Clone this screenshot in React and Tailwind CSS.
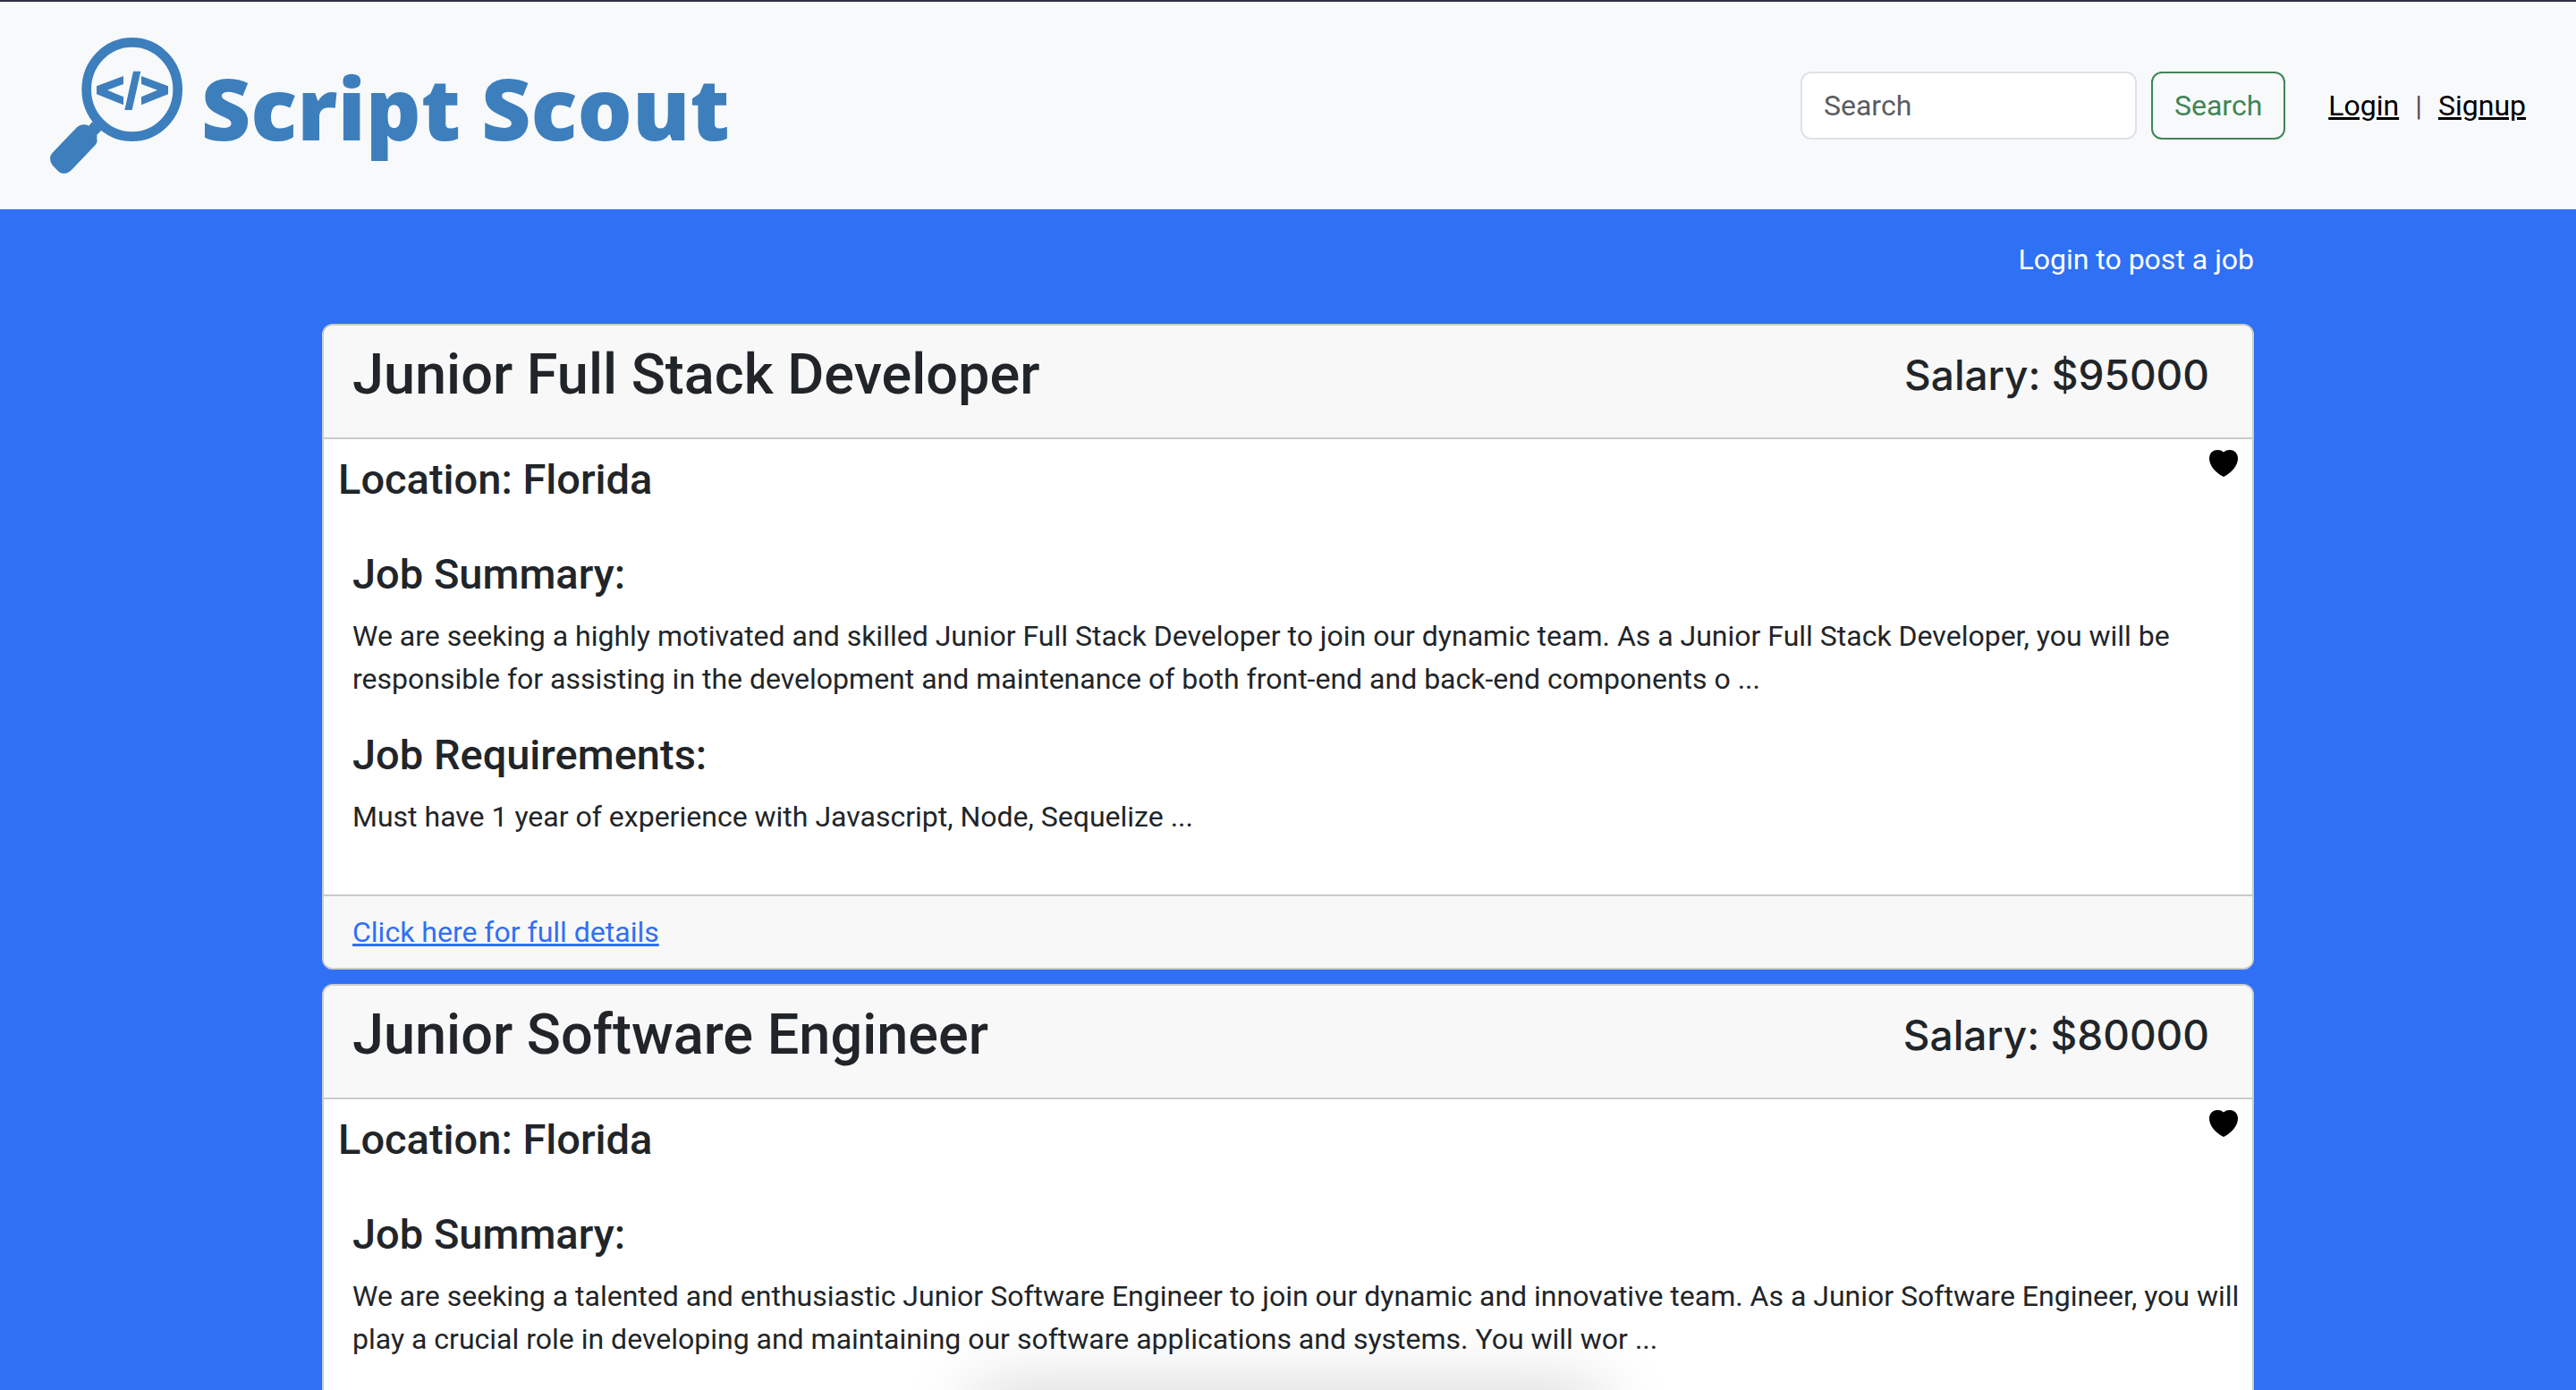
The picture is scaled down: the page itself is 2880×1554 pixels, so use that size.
const jobs = [
  {
    title: "Junior Full Stack Developer",
    salary: 95000,
    location: "Florida",
    summary:
      "We are seeking a highly motivated and skilled Junior Full Stack Developer to join our dynamic team. As a Junior Full Stack Developer, you will be responsible for assisting in the development and maintenance of both front-end and back-end components o ...",
    requirements: "Must have 1 year of experience with Javascript, Node, Sequelize ...",
  },
  {
    title: "Junior Software Engineer",
    salary: 80000,
    location: "Florida",
    summary:
      "We are seeking a talented and enthusiastic Junior Software Engineer to join our dynamic and innovative team. As a Junior Software Engineer, you will play a crucial role in developing and maintaining our software applications and systems. You will wor ...",
    requirements: "Must have 1 year of experience with Javascript, Node, Sequelize ...",
  },
];

function Logo() {
  return (
    <svg viewBox="48 36 2292 456" className="h-[152px] w-[764px]" fill="#3d7fbd" role="img" aria-label="Script Scout">
      <ellipse cx="323" cy="210" rx="153" ry="158" fill="none" stroke="#3d7fbd" strokeWidth="32" />
      <path d="M294 165V192L240 212L294 235V262L204 226V199Z" />
      <path d="M354 165V192L408 212L354 235V262L444 226V199Z" />
      <path d="M327 149H352L323 279H298Z" />
      <path d="M190 318L220 347L205 362V378Q208 386 200 396L120 480Q108 492 95 492Q82 492 74 483L56 464Q48 456 48 442Q48 430 56 422L138 337Q148 328 160 328Q170 328 178 332Z" />
      <text x="554" y="380" fontSize="289" fontWeight="800" fontFamily="'Open Sans', sans-serif">Script</text>
      <text x="1494" y="380" fontSize="289" fontWeight="800" fontFamily="'Open Sans', sans-serif">Scout</text>
    </svg>
  );
}

function Heart() {
  return (
    <svg viewBox="0 0 32 30" className="h-[30px] w-8" fill="black" aria-hidden="true">
      <path d="M16 2.500C18 .8 20 0 23 0C28.500 0 32 4.300 32 9.500C32 17 25.500 25 17 29.600Q16 30.200 15 29.600C6.500 25 0 17 0 9.500C0 4.300 3.500 0 9 0C12 0 14 .8 16 2.500Z" />
    </svg>
  );
}

function JobCard({ job }) {
  return (
    <article className="overflow-hidden rounded-xl border-2 border-[#cbcccd] bg-white">
      <header className="flex items-center justify-between border-b-2 border-[#cacaca] bg-[#f8f8f8] px-8 pt-4 pb-8">
        <h2 className="text-[63px] leading-[77px] font-medium">{job.title}</h2>
        <p className="pr-4 font-['Inter',sans-serif] text-[46px] leading-[58px] font-medium">Salary: ${job.salary}</p>
      </header>
      <div className="flex items-start justify-between px-4 pt-4">
        <h3 className="text-[47px] leading-[58px] font-medium">Location: {job.location}</h3>
        <button type="button" aria-label="Save job" className="-mt-1">
          <Heart />
        </button>
      </div>
      <div className="pt-12 pr-2 pb-[63px] pl-8">
        <h3 className="mb-4 text-[47px] leading-[58px] font-medium">Job Summary:</h3>
        <p className="mb-8">{job.summary}</p>
        <h3 className="mb-4 text-[47px] leading-[58px] font-medium">Job Requirements:</h3>
        <p>{job.requirements}</p>
      </div>
      <footer className="border-t-2 border-[#cacaca] bg-[#f8f8f8] px-8 py-4">
        <a href="#details" className="text-[#2f70f5] underline">Click here for full details</a>
      </footer>
    </article>
  );
}

export default function App() {
  return (
    <div className="relative h-screen overflow-hidden bg-[#2f70f5] font-['Roboto',sans-serif] text-[32px] leading-[48px] text-[#212529]">
      <header className="flex items-center justify-between border-t-2 border-[#2f3045] bg-[#f8f9fb] px-14 py-10">
        <a href="#home">
          <Logo />
        </a>
        <nav className="flex items-center">
          <form className="flex gap-4">
            <input
              type="search"
              aria-label="Search"
              placeholder="Search"
              className="h-19 w-94 rounded-xl border-2 border-[#dee2e6] bg-white px-6 placeholder:text-[#595c5f] placeholder:opacity-100"
            />
            <button type="button" className="h-19 rounded-xl border-2 border-[#408558] px-6 text-[#408558]">
              Search
            </button>
          </form>
          <div className="ml-12 flex gap-[18px] text-black">
            <a href="#login" className="underline">Login</a>
            <span className="text-[#555555]">|</span>
            <a href="#signup" className="underline">Signup</a>
          </div>
        </nav>
      </header>
      <main className="mx-auto w-3/4">
        <p className="pt-8 pb-12 text-right text-white">Login to post a job</p>
        <div className="flex flex-col gap-4">
          {jobs.map((job) => (
            <JobCard key={job.title} job={job} />
          ))}
        </div>
      </main>
      <div className="pointer-events-none absolute top-full left-1/2 h-20 w-[700px] -translate-x-1/2 shadow-[0_0_80px_rgba(0,0,0,0.18)]" />
    </div>
  );
}
